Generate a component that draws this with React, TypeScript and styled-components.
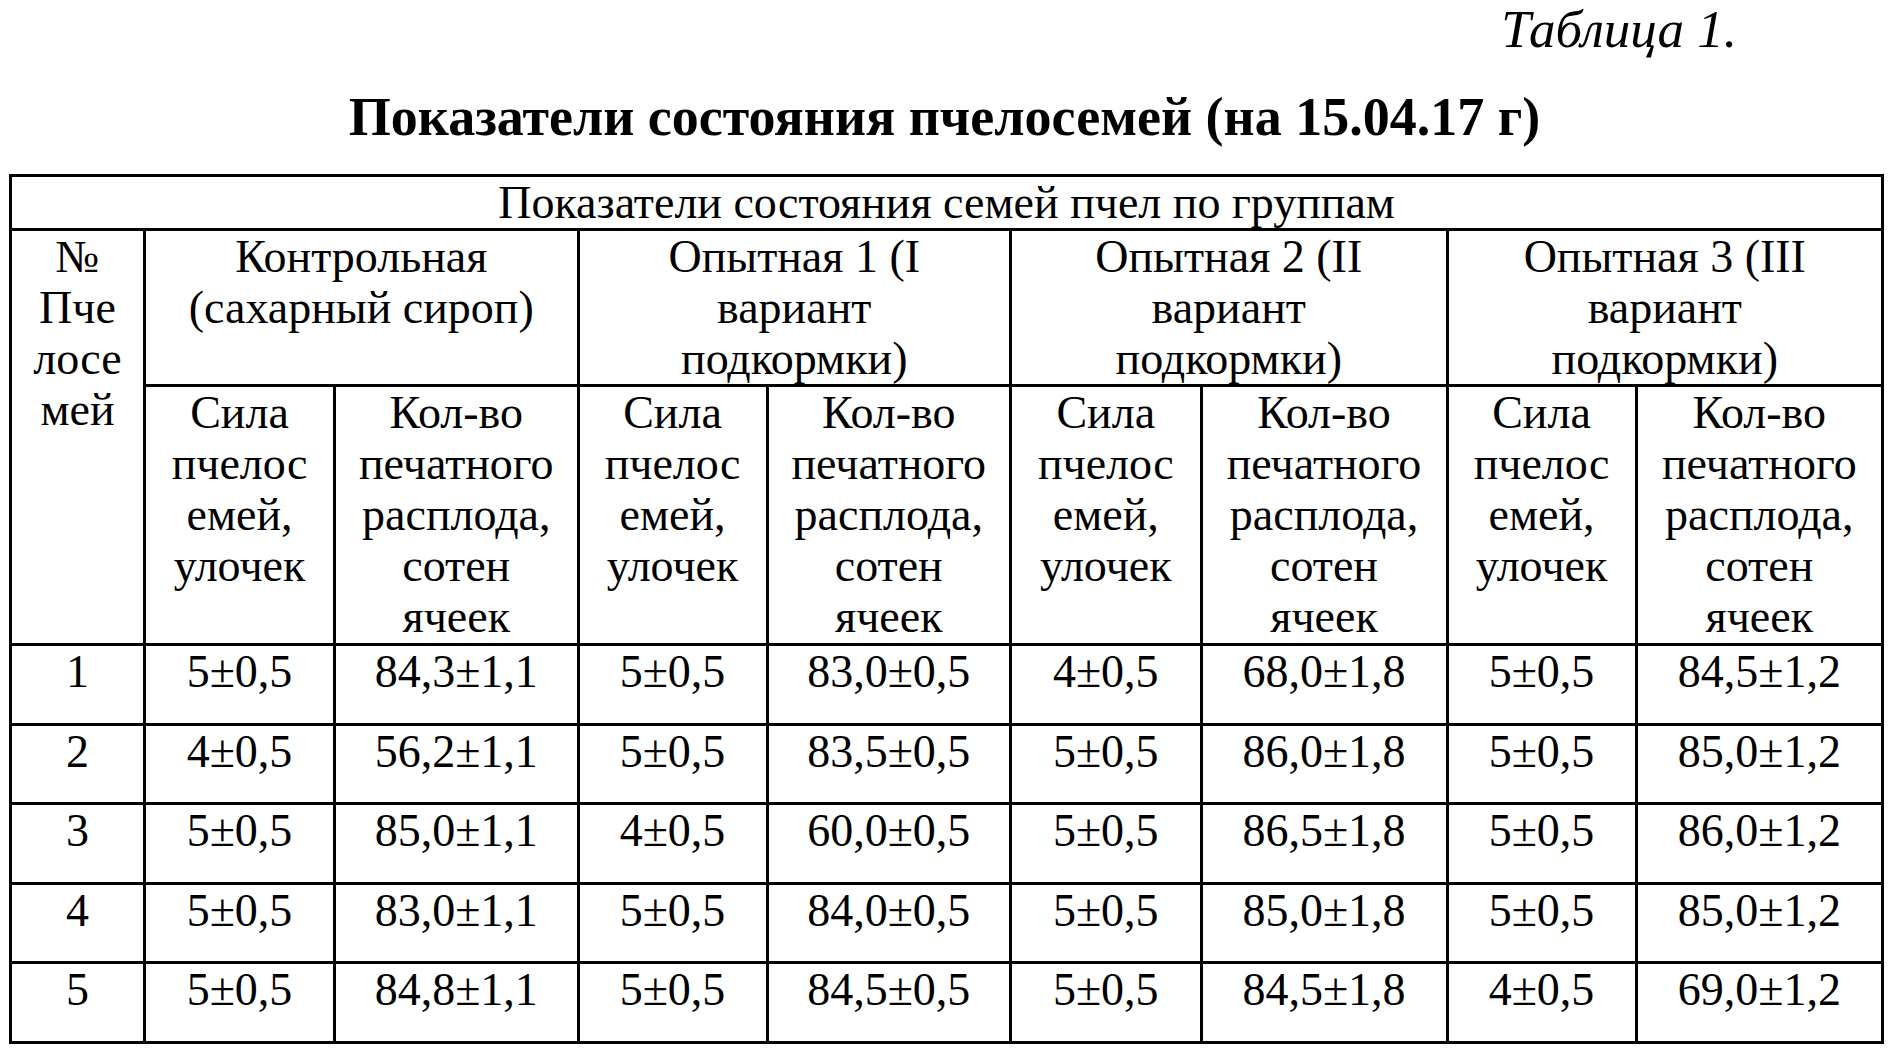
import React from "react";
import styled, { createGlobalStyle } from "styled-components";

const GlobalStyle = createGlobalStyle`
  html, body { margin: 0; padding: 0; background: #ffffff; }
  body { font-family: "Liberation Serif", "Times New Roman", serif; color: #000; }
`;

const Page = styled.div`
  width: 1889px;
  height: 1058px;
  overflow: hidden;
  display: flex;
  flex-direction: column;
  box-sizing: border-box;
  padding: 0 0 0 9px;
`;

const Caption = styled.div`
  align-self: flex-end;
  margin-right: 152px;
  font-style: italic;
  font-size: 53px;
  line-height: 58px;
`;

const Title = styled.h1`
  margin: 29px 9px 0 0;
  text-align: center;
  font-weight: bold;
  font-size: 54px;
  line-height: 60px;
`;

const Table = styled.table`
  margin-top: 27px;
  border-collapse: collapse;
  table-layout: fixed;
  width: 1872px;
  font-size: 46px;
  line-height: 51px;
`;

const Row = styled.tr<{ $h: number }>`
  height: ${(p) => p.$h}px;
`;

const Cell = styled.td`
  border: 3px solid #000;
  text-align: center;
  vertical-align: top;
  padding: 0 2px;
  white-space: pre-line;
  overflow: hidden;
`;

const widths = [134, 190, 243.5, 189, 243.5, 190.5, 246, 189, 246.5];

const groups = [
  "Контрольная\n(сахарный сироп)",
  "Опытная 1 (I\nвариант\nподкормки)",
  "Опытная 2 (II\nвариант\nподкормки)",
  "Опытная 3 (III\nвариант\nподкормки)",
];

const data: string[][] = [
  ["1", "5±0,5", "84,3±1,1", "5±0,5", "83,0±0,5", "4±0,5", "68,0±1,8", "5±0,5", "84,5±1,2"],
  ["2", "4±0,5", "56,2±1,1", "5±0,5", "83,5±0,5", "5±0,5", "86,0±1,8", "5±0,5", "85,0±1,2"],
  ["3", "5±0,5", "85,0±1,1", "4±0,5", "60,0±0,5", "5±0,5", "86,5±1,8", "5±0,5", "86,0±1,2"],
  ["4", "5±0,5", "83,0±1,1", "5±0,5", "84,0±0,5", "5±0,5", "85,0±1,8", "5±0,5", "85,0±1,2"],
  ["5", "5±0,5", "84,8±1,1", "5±0,5", "84,5±0,5", "5±0,5", "84,5±1,8", "4±0,5", "69,0±1,2"],
];

export default function App() {
  return (
    <Page>
      <GlobalStyle />
      <Caption>Таблица 1.</Caption>
      <Title>Показатели состояния пчелосемей (на 15.04.17 г)</Title>
      <Table>
        <colgroup>
          {widths.map((w, i) => (
            <col key={i} style={{ width: w }} />
          ))}
        </colgroup>
        <tbody>
          <Row $h={54}>
            <Cell colSpan={9}>Показатели состояния семей пчел по группам</Cell>
          </Row>
          <Row $h={156}>
            <Cell rowSpan={2}>{"№\nПче\nлосе\nмей"}</Cell>
            {groups.map((g) => (
              <Cell key={g} colSpan={2}>
                {g}
              </Cell>
            ))}
          </Row>
          <Row $h={259}>
            {groups.map((g) => (
              <React.Fragment key={g}>
                <Cell>{"Сила\nпчелос\nемей,\nулочек"}</Cell>
                <Cell>{"Кол-во\nпечатного\nрасплода,\nсотен\nячеек"}</Cell>
              </React.Fragment>
            ))}
          </Row>
          {data.map((r) => (
            <Row $h={79.6} key={r[0]}>
              {r.map((v, i) => (
                <Cell key={i}>{v}</Cell>
              ))}
            </Row>
          ))}
        </tbody>
      </Table>
    </Page>
  );
}
